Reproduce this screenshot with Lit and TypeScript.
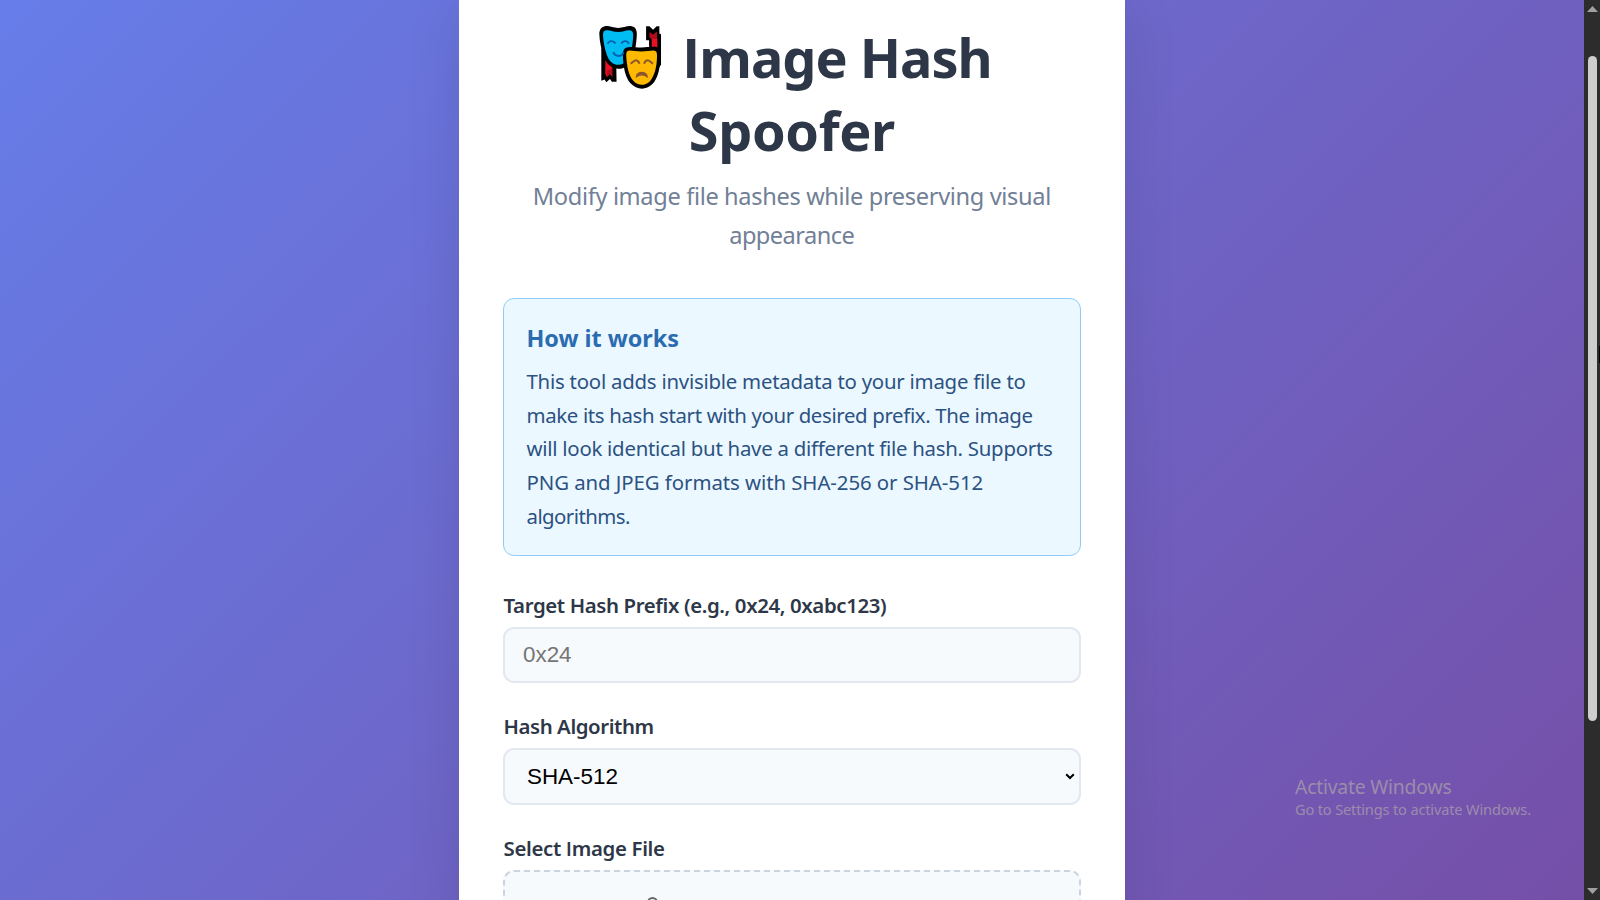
import { LitElement, html, css, svg } from "lit";
import { customElement, property } from "lit/decorators.js";

/**
 * One line of text whose tracking is adjusted so its ink spans `span` pixels.
 * The capital I is set in Open Sans, whose I has no serifs.
 */
@customElement("fit-line")
class FitLine extends LitElement {
  @property({ type: Number }) span = 0;
  @property() text = "";

  static styles = css`
    :host {
      display: block;
      white-space: nowrap;
    }
    .plain-i {
      font-family: "Open Sans", sans-serif;
    }
  `;

  updated() {
    const cs = getComputedStyle(this);
    const ctx = document.createElement("canvas").getContext("2d")!;
    const base = `${cs.fontWeight} ${cs.fontSize}`;
    ctx.font = `${base} ${cs.fontFamily}`;
    const m = ctx.measureText(this.text);
    let ink = m.actualBoundingBoxRight + m.actualBoundingBoxLeft;
    const count = this.text.split("I").length - 1;
    if (count > 0) {
      const serif = ctx.measureText("I").width;
      ctx.font = `${base} "Open Sans"`;
      ink += count * (ctx.measureText("I").width - serif);
    }
    const tracking = (this.span - ink) / (this.text.length - 1);
    this.style.letterSpacing = `${tracking.toFixed(3)}px`;
    this.style.marginRight = `${(-tracking).toFixed(3)}px`;
  }

  render() {
    return this.text
      .split(/(I)/)
      .filter((part) => part !== "")
      .map((part) => (part === "I" ? html`<span class="plain-i">I</span>` : part));
  }
}

const masks = svg`
  <path d="M34 100 L34 198 L44 194 L49 203 L60 193 L66 201 L80 201 L79 150 Z" fill="#000"/>
  <path d="M46 130 L67 150 L67 187 L60 177 L51 187 L46 178 Z" fill="#e81224"/>
  <path d="M51 168 L67 162 L67 187 L60 177 L51 187 Z" fill="#b10e1c"/>
  <path d="M169 34 L179 34 L190 44 L201 34 L209 34 L209 56 L214 58 L214 150 L200 170 L168 118 L169 96 L178 96 L178 76 L169 76 Z" fill="#000"/>
  <path d="M180 52 L190 60 L201 50 L201 70 L203 72 L203 108 L186 108 L186 72 L180 68 Z" fill="#e81224"/>
  <path d="M180 52 L190 60 L201 50 L201 72 L186 72 L180 68 Z" fill="#b10e1c"/>
  <path d="M44 34 C58 31 68 39 85 39 C102 39 112 31 126 34 C138 36 142 48 141 61 C140 76 139 88 136 102 L128 136 C119 152 103 162 86 162 C66 162 48 148 40 122 C34 102 29 82 28 58 C28 44 34 37 44 34 Z" fill="#000"/>
  <path d="M48 46 C60 44 70 51 85 51 C100 51 110 44 121 46 C129 48 131 56 130 66 C129 79 128 89 125 102 L112 134 C106 145 96 150 86 150 C70 150 57 140 50 118 C44 100 40 80 39 60 C39 51 42 47 48 46 Z" fill="#00bcf2"/>
  <path d="M110 98 C122 94 134 98 155 98 C176 98 188 94 203 97 C212 101 213 112 212 130 C211 166 202 194 188 208 C168 228 141 226 122 206 C106 188 100 156 99 122 C99 108 102 101 110 98 Z" fill="#000"/>
  <path d="M118 107 C130 107 140 110 155 110 C170 110 180 107 192 107 C200 108 202 112 202 122 C202 158 193 186 180 200 C165 214 145 214 131 199 C117 184 111 156 109 122 C109 111 112 108 118 107 Z" fill="#ffb900"/>
  <g fill="none" stroke-linecap="butt">
    <path d="M53 87 C57 76 71 76 77 86 M94 86 C100 76 113 76 117 87" stroke="#0063b1" stroke-width="6"/>
    <path d="M70 112 C76 127 96 127 101 112" stroke="#0063b1" stroke-width="6"/>
    <path d="M122 146 C130 143 134 134 141 137 C146 139 148 142 149 147 M163 147 C164 142 166 139 171 137 C178 134 182 143 190 146" stroke="#8e562e" stroke-width="6"/>
    <path d="M140 186 C140 169 172 169 172 186 C164 178 148 178 140 186 Z" stroke="#8e562e" stroke-width="4" fill="#8e562e"/>
  </g>
`;

@customElement("app-root")
class AppRoot extends LitElement {
  static styles = css`
    :host {
      display: block;
      width: 1600px;
      height: 900px;
      overflow: hidden;
      font-family: "Noto Sans", "Open Sans", sans-serif;
    }
    * {
      box-sizing: border-box;
    }
    .screen {
      position: relative;
      display: flex;
      height: 900px;
      overflow: hidden;
    }
    .page {
      flex: 1;
      height: 900px;
      overflow: hidden;
      display: flex;
      justify-content: center;
      align-items: flex-start;
      background: linear-gradient(135deg, #667eea 0%, #764ba2 100%) 0 -53px / 1584px 1175px no-repeat;
    }
    .card {
      flex: none;
      width: 666px;
      height: 1120px;
      margin-top: -25px;
      padding: 45px 44px 0;
      background: #fff;
      border-radius: 22px;
      box-shadow: 0 28px 56px rgba(0, 0, 0, 0.1);
    }
    .title {
      margin: 0;
      height: 148px;
      font-size: 54px;
      font-weight: 700;
      line-height: 74px;
      color: #2d3748;
      display: flex;
      flex-direction: column;
      align-items: center;
    }
    .first {
      display: flex;
      align-items: flex-start;
      gap: 19px;
      padding-left: 7px;
      height: 73px;
    }
    .masks {
      width: 65px;
      height: 65px;
      margin-top: 5px;
    }
    .subtitle {
      margin: 9px 0 42px;
      font-size: 23.6px;
      line-height: 39.4px;
      color: #718096;
      display: flex;
      flex-direction: column;
      align-items: center;
    }
    .info {
      height: 258px;
      padding: 23px 22px 22px 22.5px;
      border: 1px solid #90cdf4;
      border-radius: 11px;
      background: #ebf8ff;
      margin-bottom: 35px;
    }
    .info-title {
      margin: 0 0 10px;
      font-size: 23.4px;
      font-weight: 700;
      line-height: 33px;
      color: #2b6cb0;
    }
    .info-text {
      font-size: 20.4px;
      line-height: 33.8px;
      color: #2c5282;
    }
    .group {
      margin-bottom: 29px;
    }
    .label {
      font-size: 20.4px;
      font-weight: 600;
      line-height: 28px;
      color: #2d3748;
      margin-bottom: 8px;
      padding-left: 0.5px;
    }
    .control {
      display: flex;
      align-items: center;
      justify-content: space-between;
      height: 56px;
      border: 2px solid #e2e8f0;
      border-radius: 11px;
      background: #f7fafc;
      font: 22.4px "Liberation Sans", Arial, sans-serif;
      padding: 1px 4px 0 18px;
      color: #757575;
    }
    .select {
      height: 57px;
      padding-left: 22px;
      color: #000;
    }
    .chevron {
      width: 10px;
      height: 7px;
    }
    .drop {
      height: 180px;
      border: 2px dashed #cbd5e0;
      border-radius: 11px;
      background: #f7fafc;
      padding: 25px 0 0 142px;
    }
    .ring {
      display: block;
      width: 11px;
      height: 11px;
      border: 2px solid #666;
      border-radius: 50%;
    }
    .scroll {
      width: 16px;
      background: #2c2c2c;
      display: flex;
      flex-direction: column;
      align-items: center;
      padding: 6px 0;
    }
    .arrow {
      width: 11px;
      height: 6px;
      margin-left: 1px;
    }
    .thumb {
      width: 9px;
      height: 665px;
      margin: 44px 0 auto 1px;
      border-radius: 5px;
      background: #cdcdcd;
    }
    .notch {
      position: absolute;
      right: 0;
      top: 346px;
      width: 1px;
      height: 17px;
      background: #000;
    }
    .activate {
      position: absolute;
      left: 1295px;
      top: 773px;
      color: #9c8cab;
    }
    .big {
      font-size: 19.4px;
      line-height: 27px;
    }
    .small {
      font-size: 14.6px;
      line-height: 18px;
    }
  `;

  private infoLines: [string, number][] = [
    ["This tool adds invisible metadata to your image file to", 499],
    ["make its hash start with your desired prefix. The image", 505],
    ["will look identical but have a different file hash. Supports", 525.5],
    ["PNG and JPEG formats with SHA-256 or SHA-512", 455],
    ["algorithms.", 102.5],
  ];

  render() {
    return html`
      <div class="screen">
        <div class="page">
          <main class="card">
            <h1 class="title">
              <span class="first">
                <svg class="masks" viewBox="24 30 196 196">${masks}</svg>
                <fit-line span="306.3" text="Image Hash"></fit-line>
              </span>
              <fit-line span="204.2" text="Spoofer"></fit-line>
            </h1>
            <div class="subtitle">
              <fit-line span="515.4" text="Modify image file hashes while preserving visual"></fit-line>
              <fit-line span="124.3" text="appearance"></fit-line>
            </div>
            <section class="info">
              <h3 class="info-title"><fit-line span="149.7" text="How it works"></fit-line></h3>
              <div class="info-text">
                ${this.infoLines.map(([t, w]) => html`<fit-line .span=${w} .text=${t}></fit-line>`)}
              </div>
            </section>
            <div class="group">
              <div class="label"><fit-line span="382.5" text="Target Hash Prefix (e.g., 0x24, 0xabc123)"></fit-line></div>
              <div class="control"><span>0x24</span></div>
            </div>
            <div class="group">
              <div class="label"><fit-line span="149" text="Hash Algorithm"></fit-line></div>
              <div class="control select">
                <span>SHA-512</span>
                <svg class="chevron" viewBox="0 0 10 7">
                  <path d="M1.2 1.2 L5 5 L8.8 1.2" fill="none" stroke="#000" stroke-width="2" />
                </svg>
              </div>
            </div>
            <div class="group">
              <div class="label"><fit-line span="160.5" text="Select Image File"></fit-line></div>
              <div class="drop"><i class="ring"></i></div>
            </div>
          </main>
        </div>
        <div class="scroll">
          <svg class="arrow" viewBox="0 0 11 6"><path d="M5.5 0 L11 6 H0 Z" fill="#a0a0a0" /></svg>
          <div class="thumb"></div>
          <svg class="arrow" viewBox="0 0 11 6"><path d="M5.5 6 L11 0 H0 Z" fill="#a0a0a0" /></svg>
        </div>
        <div class="notch"></div>
        <div class="activate">
          <fit-line class="big" span="156.4" text="Activate Windows"></fit-line>
          <fit-line class="small" span="235.2" text="Go to Settings to activate Windows."></fit-line>
        </div>
      </div>
    `;
  }
}
